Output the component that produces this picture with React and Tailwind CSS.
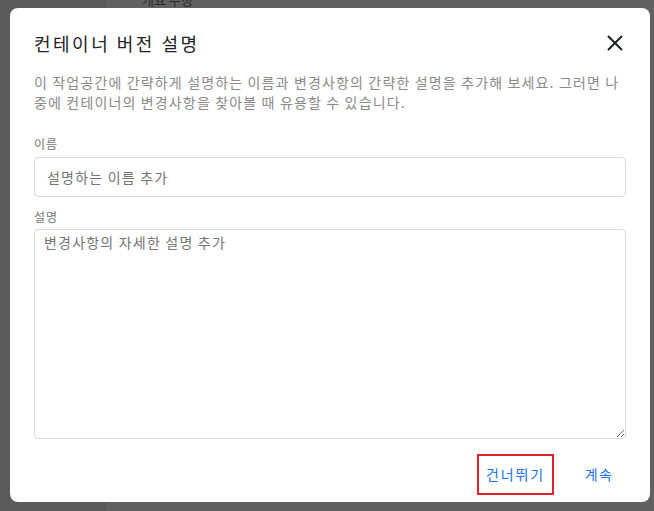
import React from "react";

const App = () => {
  return (
    <div
      className="relative w-[654px] h-[511px] overflow-hidden bg-[#5f5f5f]"
      style={{ fontFamily: '"Noto Sans CJK KR", "Noto Sans", sans-serif' }}
    >
      {/* page behind the overlay */}
      <div className="flex h-full">
        <div className="w-[106px] h-full bg-[#5a5a5a] border-r border-[#555]" />
        <div className="flex-1 h-full bg-[#616161]">
          <div className="-mt-[10px] ml-[36px] text-[13px] text-[#2a2a2a]">개요 수정</div>
        </div>
      </div>

      {/* dialog */}
      <div className="absolute left-[10px] top-[8px] w-[640px] h-[494px] bg-white rounded-[8px] flex flex-col px-6 pt-[22px]">
        <div className="flex items-center justify-between h-[26px]">
          <h2 className="text-[18px] text-[#202124] tracking-[2.5px] font-normal">컨테이너 버전 설명</h2>
          <button className="w-[26px] h-[26px] flex items-center justify-center -mr-[2px] text-[#202124]">
            <svg width="18" height="18" viewBox="0 0 18 18" fill="none" stroke="currentColor" strokeWidth="2">
              <path d="M2 2 L16 16 M16 2 L2 16" />
            </svg>
          </button>
        </div>

        <p className="mt-[16px] text-[14px] leading-[20px] tracking-[1.15px] text-[#8a8a8a] break-all">
          이 작업공간에 간략하게 설명하는 이름과 변경사항의 간략한 설명을 추가해 보세요. 그러면 나중에 컨테이너의 변경사항을 찾아볼 때 유용할 수 있습니다.
        </p>

        <label className="mt-[24px] text-[12px] leading-[16px] tracking-[1px] text-[#757575]">이름</label>
        <input
          type="text"
          placeholder="설명하는 이름 추가"
          className="mt-[5px] h-[40px] w-full border border-[#dadce0] rounded-[4px] px-3 text-[14px] tracking-[1.2px] placeholder:text-[#757575] outline-none"
        />

        <label className="mt-[12px] text-[12px] leading-[16px] tracking-[1px] text-[#757575]">설명</label>
        <textarea
          placeholder="변경사항의 자세한 설명 추가"
          className="mt-[4px] h-[210px] w-full border border-[#dadce0] rounded-[4px] px-[9px] py-[2px] text-[14px] tracking-[1.2px] placeholder:text-[#757575] outline-none resize-y"
        />

        <div className="mt-[15px] flex items-center justify-end gap-[31px] pr-[13px]">
          <button className="h-[41px] px-[7px] border-2 border-[#e3202a] text-[14px] tracking-[1.8px] text-[#1a73e8]">건너뛰기</button>
          <button className="text-[14px] tracking-[1.2px] text-[#1a73e8]">계속</button>
        </div>
      </div>
    </div>
  );
};

export default App;
